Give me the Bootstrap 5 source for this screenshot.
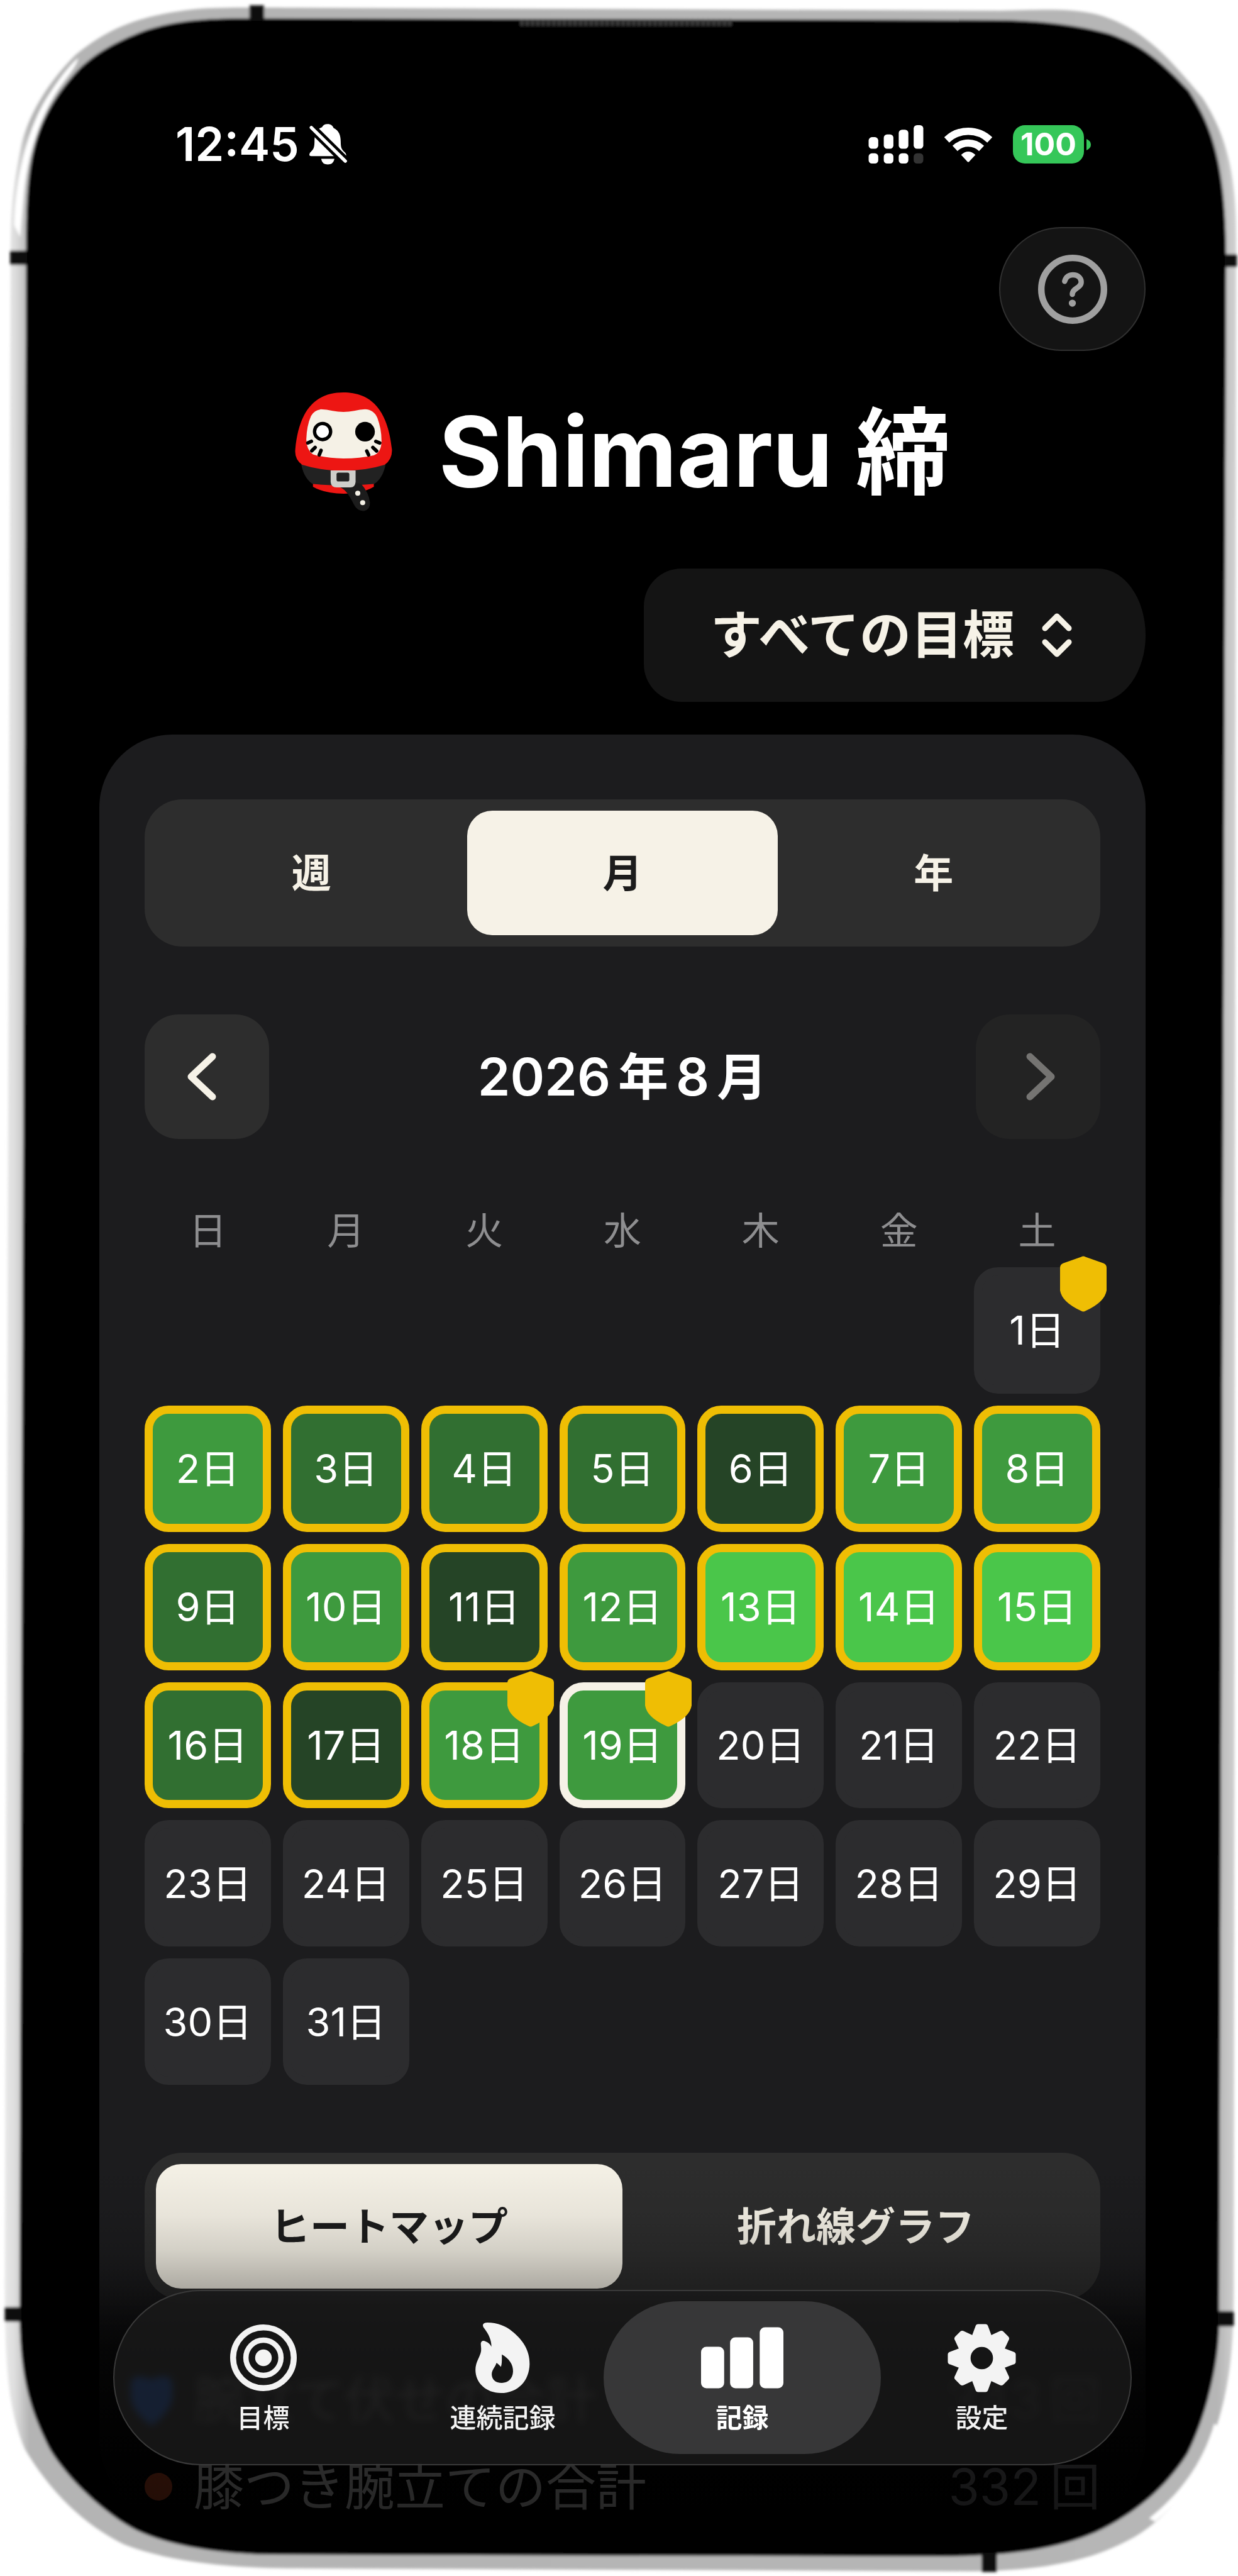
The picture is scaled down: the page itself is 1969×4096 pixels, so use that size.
<!DOCTYPE html>
<html lang="ja">
<head>
<meta charset="utf-8">
<meta name="viewport" content="width=device-width, initial-scale=1">
<title>Shimaru 締</title>
<link href="https://cdn.jsdelivr.net/npm/bootstrap@5.3.0/dist/css/bootstrap.min.css" rel="stylesheet">
<style>
  :root { --cream: #f6f2e7; --gold: #efbe04; --panel: #1c1c1e; --control: #2d2d2d; }
  body { background: #fff; color: #fff; font-family: Inter, "Noto Sans CJK JP", sans-serif; }
  svg { display: block; flex: none; }
  .device { min-height: 100vh; padding: 197px 147px 72px 158px; overflow: hidden; }
  .device-frame { inset: 0; z-index: 0; }
  .screen { z-index: 1; }
  .status-bar { height: 65px; padding: 0 87px 0 121px; }
  .clock { font-size: 74px; line-height: 65px; font-weight: 600; }
  .battery { width: 113px; height: 61px; border-radius: 19px; background: #35c759; font-size: 50px; line-height: 61px; font-weight: 700; }
  .status-icons { gap: 33px; }
  .help-btn { width: 233px; height: 197px; margin-top: 99px; border-radius: 99px; background: #141414; border: 2px solid #303030; }
  .brand { margin-top: 66px; gap: 74px; height: 189px; }
  .brand h1 { font-size: 154px; line-height: 192px; font-weight: 700; }
  .brand .kanji { font-size: 150px; }
  .goal-picker { margin-top: 91px; }
  .goal-select { width: auto; height: 212px; padding: 0 199px 0 106px; border: 0; background: #141414; color: var(--cream);
    font-size: 82px; line-height: 120px; font-weight: 600; border-radius: 60px 76px 76px 60px / 60px 106px 106px 60px; appearance: none; }
  .goal-arrows { right: 117px; top: 71px; pointer-events: none; }
  .panel { margin-top: 52px; padding: 103px 72px 0 72px; border-radius: 116px 116px 150px 150px;
    background: linear-gradient(var(--panel) calc(100% - 420px), #000 calc(100% - 40px)); }
  .segments { display: flex; padding: 18px; height: 234px; border-radius: 60px; background: var(--control); }
  .segments label { flex: 1 1 0; display: flex; align-items: center; justify-content: center; border: 0; border-radius: 40px; padding: 0;
    font-size: 63px; line-height: 90px; font-weight: 600; color: var(--cream); }
  .segments .btn-check:checked + label { background: var(--cream); color: #1c1c1c; }
  .month-nav { margin-top: 108px; }
  .month-nav button { width: 198px; height: 198px; border: 0; border-radius: 54px; background: var(--control); color: var(--cream); }
  .month-nav button:disabled { background: #232323; color: #757472; opacity: 1; }
  .month-nav h2 { font-size: 83px; line-height: 120px; font-weight: 600; gap: 12px; }
  .month-nav h2 .kanji { font-size: 80px; }
  .week, .days { display: grid; grid-template-columns: repeat(7, 1fr); gap: 19px; }
  .week { margin-top: 104px; font-size: 60px; line-height: 84px; color: #8e8e90; text-align: center; }
  .days { margin-top: 16px; }
  .day { position: relative; aspect-ratio: 1; display: flex; align-items: center; justify-content: center; padding: 0; border: 13px solid #2c2c2e;
    border-radius: 38px; background: #2c2c2e; color: #fff; font-size: 63px; line-height: 90px; white-space: nowrap; }
  .first-sat { grid-column: 7; }
  .done { border-color: var(--gold); }
  .today { border-color: #f6f2e7; }
  .lv1 { background: #254426; } .lv2 { background: #316f31; } .lv3 { background: #3e9a3e; } .lv4 { background: #4ac64a; }
  .shield { position: absolute; top: -31px; right: -23px; }
  .chart-tabs { margin-top: 108px; }
  .totals { margin-top: 90px; font-size: 80px; line-height: 138px; }
  .totals li { gap: 34px; }
  .totals .marker { width: 44px; height: 44px; border-radius: 50%; background: #e8572a; }
  .totals .heart { position: relative; z-index: 2; margin-left: -22px; }
  .totals .amount { color: #8e8e93; gap: 14px; }
  .fade-out { left: 0; right: 0; bottom: 0; height: 740px; pointer-events: none; border-radius: 0 0 150px 150px;
    background: linear-gradient(rgba(0,0,0,0) 150px, rgba(0,0,0,.06) 240px, rgba(0,0,0,.14) 295px, rgba(0,0,0,.3) 357px, rgba(0,0,0,.7) 450px, rgba(0,0,0,.82) 600px, rgba(0,0,0,.86) 740px); }
  .tab-bar { left: 22px; right: 22px; bottom: 103px; height: 279px; padding: 16px 46px; border: 2px solid #3a3a3a; border-radius: 140px;
    background: rgba(26,26,26,.82); backdrop-filter: blur(6px); z-index: 3; }
  .tab-bar a { flex: 1 1 0; margin: 0 -30px; border-radius: 122px; color: #f3f3f3; font-size: 42px; line-height: 60px; font-weight: 500; text-decoration: none; padding-top: 32px; }
  .tab-bar a.active { background: #373738; color: #fff; font-weight: 700; }
  .tab-icon { height: 116px; margin-bottom: 8px; }
</style>
<script src="https://cdn.jsdelivr.net/npm/bootstrap@5.3.0/dist/js/bootstrap.bundle.min.js"></script>
</head>
<body>
<div class="device position-relative">
  <svg class="device-frame position-absolute w-100 h-100" viewBox="0 0 2090 4347" preserveAspectRatio="none" aria-hidden="true">
    <defs>
      <linearGradient id="rim" x1="0" x2="1" y1="0" y2="0">
        <stop offset="0" stop-color="#e8e8e8"/><stop offset=".008" stop-color="#dedede"/><stop offset=".02" stop-color="#b4b4b4"/>
        <stop offset=".985" stop-color="#b6b6b6"/><stop offset="1" stop-color="#d2d2d2"/>
      </linearGradient>
      <filter id="soft" x="-2%" y="-2%" width="104%" height="104%"><feGaussianBlur stdDeviation="2"/></filter>
    </defs>
    <g filter="url(#soft)">
      <path fill="url(#rim)" d="M18 430C18 360 20 320 37 240C52 185 85 135 127 93C185 45 240 25 333 15C380 12 430 13 500 13L1690 18C1760 16 1810 14 1850 24C1930 45 1975 100 2030 165C2065 220 2087 280 2087 400L2083 3850C2083 3980 2075 4035 2043 4128C2010 4200 1970 4245 1925 4275C1860 4315 1780 4338 1640 4339L500 4334C400 4334 290 4325 210 4294C140 4260 85 4205 42 4133C15 4070 8 4000 8 3850Z"/>
      <path fill="#fff" d="M24 380C26 290 50 215 75 172C95 140 115 112 132 98C130 112 112 130 95 156C70 195 46 260 40 330L34 400Z"/>
      <path fill="#fff" d="M2050 4090C2030 4160 1990 4210 1940 4250L1950 4255C1995 4220 2035 4165 2056 4095Z"/>
      <path fill="#060606" d="M44 420C44 350 46 290 60 240C75 190 100 152 133 117C165 86 205 66 250 50C300 34 350 31 417 31L1690 34C1760 35 1820 43 1873 57C1925 75 1955 98 2007 153C2040 205 2069 260 2070 433L2058 3922C2058 3980 2040 4070 2005 4140C1970 4195 1920 4240 1850 4273C1780 4303 1700 4313 1591 4314L456 4311C380 4310 290 4298 231 4270C180 4245 115 4185 84 4133C55 4075 33 4020 33 3900Z"/>
      <path fill="#111" d="M421 9h25v26h-25zM17 423h28v24H17zM2068 429h20v22h-20zM8 3893h28v25H8zM2056 3900h27v26h-27zM1657 4308h26v32h-26z"/>
      <path stroke="#3c3c3c" stroke-width="11" stroke-dasharray="6 3" d="M878 38H1236"/>
    </g>
    <path fill="#000" d="M84 420C84 200 200 76 420 74H1690C1920 76 2022 210 2022 430L2008 3800C2008 4110 1850 4262 1600 4262H450C210 4262 80 4100 80 3850Z"/>
  </svg>

  <div class="screen position-relative">
    <header>
      <div class="status-bar d-flex justify-content-between align-items-center">
        <div class="d-flex align-items-center gap-3">
          <span class="clock">12:45</span>
          <svg width="60" height="65" viewBox="0 0 190 205" aria-label="消音">
            <path fill="#fff" d="M92 0c16 0 26 8 30 20c28 12 36 40 36 68c0 30 4 40 20 54q8 8 8 14q0 6-8 6H10q-10 0-10-8q0-8 8-14c14-12 18-24 18-54c0-30 8-60 38-70c4-10 14-16 28-16zM60 175h66q-4 29-33 29q-30 0-33-29z"/>
            <path stroke="#000" stroke-width="46" d="M-4 4L196 202"/>
            <path stroke="#fff" stroke-width="17" stroke-linecap="round" d="M10 18L181 187"/>
          </svg>
        </div>
        <div class="status-icons d-flex align-items-center">
          <svg width="88" height="61" viewBox="0 0 278 195" fill="#fff" aria-label="電波">
            <rect y="61" width="49" height="59" rx="17"/><rect x="77" y="47" width="49" height="73" rx="17"/><rect x="153" y="23" width="49" height="97" rx="17"/><rect x="229" width="49" height="120" rx="17"/>
            <rect y="143" width="49" height="52" rx="17"/><rect x="77" y="143" width="49" height="52" rx="17"/><rect x="153" y="143" width="49" height="52" rx="17"/><rect x="229" y="143" width="49" height="52" rx="17" fill="#333"/>
          </svg>
          <svg width="76" height="56" viewBox="0 0 243 178" fill="none" stroke="#fff" stroke-width="37" aria-label="Wi-Fi">
            <path d="M12 65A158 158 0 0 1 231 65"/><path d="M54 108A98 98 0 0 1 189 108"/>
            <path fill="#fff" stroke="none" d="M85 141Q121 107 158 141L126 175Q121 180 117 175Z"/>
          </svg>
          <div class="d-flex align-items-center">
            <span class="battery text-center">100</span>
            <svg class="ms-1" width="7" height="18" viewBox="0 0 7 18"><path fill="#35c759" d="M0 0Q7 3 7 9T0 18Z"/></svg>
          </div>
        </div>
      </div>
      <div class="d-flex justify-content-end">
        <button type="button" class="help-btn d-flex align-items-center justify-content-center p-0" aria-label="ヘルプ">
          <svg width="110" height="110" viewBox="0 0 117 117" fill="none" stroke="#a0a0a0" stroke-linecap="round" stroke-linejoin="round">
            <circle cx="58.500" cy="58.500" r="53" stroke-width="11"/>
            <path stroke-width="9" d="M45 45C47 37 53 34 59 34C67 34 73 39 73 46C73 57 58 56 58 67"/><circle cx="58" cy="82" r="6" fill="#a0a0a0" stroke="none"/>
          </svg>
        </button>
      </div>
      <div class="brand d-flex align-items-center justify-content-center">
        <svg width="155" height="189" viewBox="0 0 492 605" aria-hidden="true">
          <path fill="#ed1613" d="M90 462V480Q150 515 245 515Q340 515 400 480V462Z"/>
          <path fill="#222" d="M28 350C35 410 60 450 90 466Q245 480 400 466C430 450 455 410 462 350Z"/>
          <path fill="#ed1613" d="M245 0C380 0 470 80 492 290Q495 340 455 368Q360 398 245 398Q130 398 35 368Q-5 340 0 290C20 80 110 0 245 0Z"/>
          <path fill="#f5f1e6" d="M130 86Q160 86 190 94Q245 104 300 94Q330 86 355 86Q400 88 418 130Q440 190 439 250Q438 305 400 320Q330 336 245 336Q150 334 90 315Q58 295 56 240Q58 170 80 120Q95 90 130 86Z"/>
          <circle cx="139" cy="199" r="41" fill="#fff" stroke="#000" stroke-width="17"/><circle cx="355" cy="200" r="50"/>
          <path stroke="#000" stroke-width="18" stroke-linecap="round" d="M64 257L82 249M84 297L101 280M122 318L131 295M410 249L430 257M395 280L414 298M364 298L373 318"/>
          <path fill="#1c1c1c" d="M230 484C270 500 290 560 308 585Q325 605 350 603Q382 595 380 560Q375 510 335 465L300 460Z"/>
          <path fill="#cececa" d="M180 397H307V455Q305 483 280 483H210Q182 483 180 455Z"/><rect x="210" y="408" width="65" height="45" rx="9" fill="#222"/>
          <circle cx="318" cy="513" r="13" fill="#f5f1e6"/><circle cx="343" cy="561" r="13" fill="#f5f1e6"/>
        </svg>
        <h1 class="m-0 text-nowrap">Shimaru <span class="kanji">締</span></h1>
      </div>
      <div class="goal-picker d-flex justify-content-end">
        <div class="position-relative">
          <label class="visually-hidden" for="goal">目標を選択</label>
          <select id="goal" class="goal-select"><option>すべての目標</option></select>
          <svg class="goal-arrows position-absolute" width="48" height="70" viewBox="0 0 48 70" fill="none" stroke="#f6f2e7" stroke-width="9" stroke-linecap="round" stroke-linejoin="round"><path d="M5 24L24 5L43 24M5 46L24 65L43 46"/></svg>
        </div>
      </div>
    </header>

    <main class="panel">
      <div class="segments" role="group" aria-label="期間">
        <input class="btn-check" type="radio" name="span" id="span-week"><label for="span-week">週</label>
        <input class="btn-check" type="radio" name="span" id="span-month" checked><label for="span-month">月</label>
        <input class="btn-check" type="radio" name="span" id="span-year"><label for="span-year">年</label>
      </div>
      <div class="month-nav d-flex justify-content-between align-items-center">
        <button type="button" class="d-flex align-items-center justify-content-center" aria-label="前の月">
          <svg class="me-3" width="46" height="76" viewBox="0 0 46 76" fill="none" stroke="currentColor" stroke-width="11" stroke-linecap="round" stroke-linejoin="round"><path d="M40 6L6 38L40 70"/></svg>
        </button>
        <h2 class="m-0 d-flex align-items-center"><span>2026</span><span class="kanji">年</span><span>8</span><span class="kanji">月</span></h2>
        <button type="button" class="d-flex align-items-center justify-content-center" aria-label="次の月" disabled>
          <svg class="ms-2" width="46" height="76" viewBox="0 0 46 76" fill="none" stroke="currentColor" stroke-width="11" stroke-linecap="round" stroke-linejoin="round"><path d="M6 6L40 38L6 70"/></svg>
        </button>
      </div>
      <div class="week"><span>日</span><span>月</span><span>火</span><span>水</span><span>木</span><span>金</span><span>土</span></div>
      <div class="days">
        <button type="button" class="day first-sat">1日<svg class="shield" width="74" height="89" viewBox="0 0 79 94" fill="#efbe04"><path d="M36 1Q39.500-1 43 1L74 12Q79 14 79 20V58Q76 78 43 93Q39.500 95 36 93Q3 78 0 58V20Q0 14 5 12Z"/></svg></button>
        <button type="button" class="day done lv3">2日</button><button type="button" class="day done lv2">3日</button><button type="button" class="day done lv2">4日</button><button type="button" class="day done lv2">5日</button><button type="button" class="day done lv1">6日</button><button type="button" class="day done lv3">7日</button><button type="button" class="day done lv3">8日</button>
        <button type="button" class="day done lv2">9日</button><button type="button" class="day done lv3">10日</button><button type="button" class="day done lv1">11日</button><button type="button" class="day done lv3">12日</button><button type="button" class="day done lv4">13日</button><button type="button" class="day done lv4">14日</button><button type="button" class="day done lv4">15日</button>
        <button type="button" class="day done lv2">16日</button><button type="button" class="day done lv1">17日</button>
        <button type="button" class="day done lv3">18日<svg class="shield" width="74" height="89" viewBox="0 0 79 94" fill="#efbe04"><path d="M36 1Q39.500-1 43 1L74 12Q79 14 79 20V58Q76 78 43 93Q39.500 95 36 93Q3 78 0 58V20Q0 14 5 12Z"/></svg></button>
        <button type="button" class="day today lv3">19日<svg class="shield" width="74" height="89" viewBox="0 0 79 94" fill="#efbe04"><path d="M36 1Q39.500-1 43 1L74 12Q79 14 79 20V58Q76 78 43 93Q39.500 95 36 93Q3 78 0 58V20Q0 14 5 12Z"/></svg></button>
        <button type="button" class="day">20日</button><button type="button" class="day">21日</button><button type="button" class="day">22日</button>
        <button type="button" class="day">23日</button><button type="button" class="day">24日</button><button type="button" class="day">25日</button><button type="button" class="day">26日</button><button type="button" class="day">27日</button><button type="button" class="day">28日</button><button type="button" class="day">29日</button>
        <button type="button" class="day">30日</button><button type="button" class="day">31日</button>
      </div>
      <div class="segments chart-tabs" role="group" aria-label="グラフの種類">
        <input class="btn-check" type="radio" name="chart" id="chart-heat" checked><label for="chart-heat">ヒートマップ</label>
        <input class="btn-check" type="radio" name="chart" id="chart-line"><label for="chart-line">折れ線グラフ</label>
      </div>
      <ul class="totals list-unstyled mb-0">
        <li class="d-flex align-items-center">
          <svg class="heart" width="66" height="84" viewBox="0 0 68 84" aria-hidden="true"><path fill="#053a9c" d="M0 14Q2 2 18 4L34 8L50 3Q66 2 68 14V40Q62 66 34 84Q6 66 0 40Z"/></svg>
          <span>腕立て伏せの合計</span><span class="amount ms-auto d-flex"><span>343</span><span>回</span></span></li>
        <li class="d-flex align-items-center"><span class="marker"></span><span>膝つき腕立ての合計</span><span class="amount ms-auto d-flex"><span>332</span><span>回</span></span></li>
      </ul>
    </main>
    <div class="fade-out position-absolute"></div>
    <nav class="tab-bar position-absolute d-flex" aria-label="メイン">
      <a href="#goals" class="d-flex flex-column align-items-center"><span class="tab-icon d-flex align-items-center">
        <svg width="106" height="106" viewBox="0 0 112 112" fill="none" stroke="currentColor"><circle cx="56" cy="56" r="51" stroke-width="10"/><circle cx="56" cy="56" r="29.500" stroke-width="9"/><circle cx="56" cy="56" r="14" fill="currentColor" stroke="none"/></svg></span>目標</a>
      <a href="#streak" class="d-flex flex-column align-items-center"><span class="tab-icon d-flex align-items-center">
        <svg width="87" height="112" viewBox="0 0 92 119" fill="currentColor"><path fill-rule="evenodd" d="M20 0C37 0 52 6 62 15C80 29 92 48 91.500 70C91 98 72 119 43 119C18 119 0 102 0 80C0 66 8 58 9.500 48C10 43 9 39 9 35C10 30 14 30 17 32C22 34 25 37 27 41C27 30 23 20 13.500 8C11 3 14 0 20 0ZM44.600 54C57 61 64 71 63.500 83C63 95 55 102 44.600 102C34 102 27.500 96 27.500 87C28 79 33 76 35.700 68C38 70 41 72 43 75C45 70 44.600 62 44.600 54Z"/></svg></span>連続記録</a>
      <a href="#records" class="active d-flex flex-column align-items-center" aria-current="page"><span class="tab-icon d-flex align-items-center">
        <svg width="131" height="98" viewBox="0 0 139 103" fill="currentColor"><rect y="33" width="39" height="70" rx="9"/><rect x="49" y="17" width="39" height="86" rx="9"/><rect x="99" width="40" height="103" rx="9"/></svg></span>記録</a>
      <a href="#settings" class="d-flex flex-column align-items-center"><span class="tab-icon d-flex align-items-center">
        <svg width="109" height="109" viewBox="-58 -58 116 116" fill="currentColor"><defs><path id="tooth" d="M-18-34L-11-53Q-10-57.500-6-57.500H6Q10-57.500 11-53L18-34Z"/></defs>
          <circle r="30" fill="none" stroke="currentColor" stroke-width="22"/>
          <use href="#tooth"/><use href="#tooth" transform="rotate(45)"/><use href="#tooth" transform="rotate(90)"/><use href="#tooth" transform="rotate(135)"/><use href="#tooth" transform="rotate(180)"/><use href="#tooth" transform="rotate(225)"/><use href="#tooth" transform="rotate(270)"/><use href="#tooth" transform="rotate(315)"/></svg></span>設定</a>
    </nav>
  </div>
</div>
</body>
</html>
